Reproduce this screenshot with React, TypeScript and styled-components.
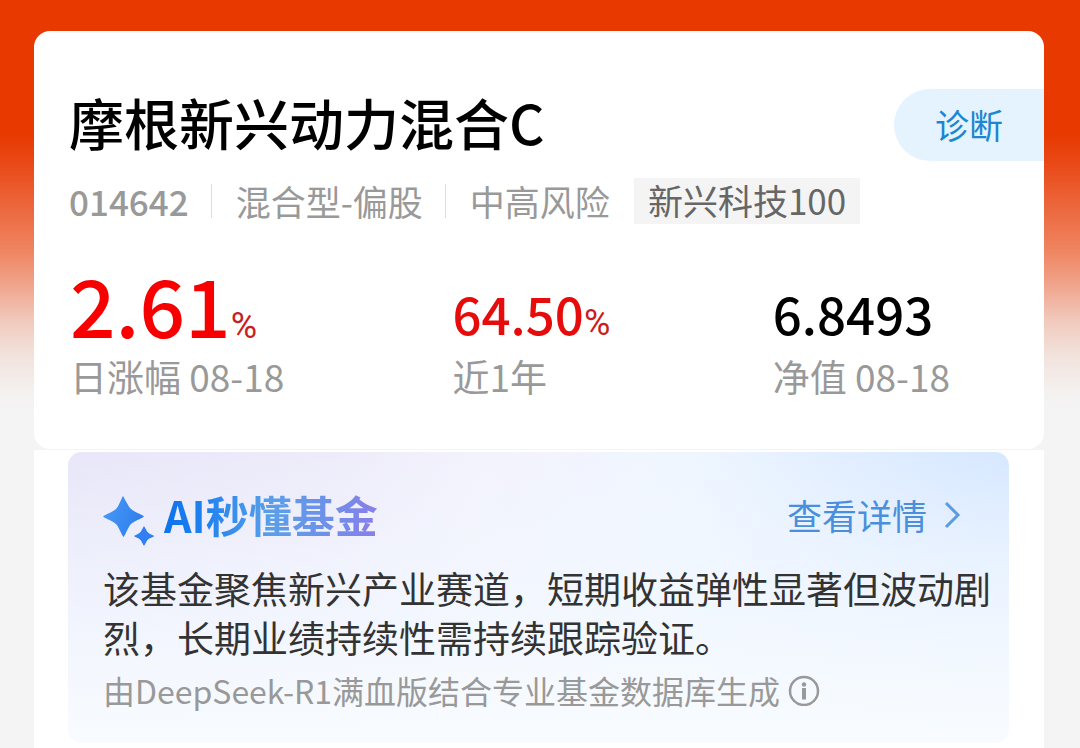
import React from 'react';
import styled, { createGlobalStyle } from 'styled-components';

const sans = `'Noto Sans CJK SC', 'Noto Sans', sans-serif`;

const GlobalStyle = createGlobalStyle`
  * { box-sizing: border-box; }
  body {
    margin: 0;
    background: #f4f4f4;
    font-family: ${sans};
    color: #000;
  }
  h1, h2, p, dl, dd, dt { margin: 0; font-weight: 400; }
`;

const Page = styled.main`
  min-height: 100vh;
  padding: 31px 36px 0 34px;
  background: linear-gradient(
      180deg,
      #e73900 0,
      #e73900 134px,
      #e94c1a 168px,
      #ec693f 210px,
      #ef8460 250px,
      #f0a48c 285px,
      #f1c9bc 320px,
      #f2e2dc 355px,
      #f4f2f1 395px,
      #f4f4f4 412px
    )
    no-repeat;
`;

const FundCard = styled.section`
  padding: 58px 0 49px 35px;
  border-radius: 16px;
  background: #fff;
`;

const TitleRow = styled.header`
  display: flex;
  align-items: flex-start;
  justify-content: space-between;
  height: 72px;
`;

const FundName = styled.h1`
  font-size: 55px;
  font-weight: 500;
  line-height: 64px;
  white-space: nowrap;
`;

const DiagnoseButton = styled.button`
  width: 150px;
  height: 72px;
  padding: 0;
  border: 0;
  border-radius: 36px 0 0 36px;
  background: #e5f3ff;
  color: #1c86d1;
  font: 400 34px/70px ${sans};
`;

const MetaRow = styled.div`
  display: flex;
  align-items: center;
  height: 46px;
  margin-top: 17px;
  font-size: 35px;
  line-height: 44px;
  color: #999;
  white-space: nowrap;
`;

const Code = styled.span`
  font-weight: 500;
`;

const Divider = styled.span`
  width: 1px;
  height: 34px;
  margin: 0 24px 0 22px;
  background: #ddd;
`;

const Tag = styled.span`
  height: 46px;
  margin-left: 24px;
  padding: 0 14px;
  background: #f4f4f4;
  color: #666;
`;

const Stats = styled.dl`
  display: grid;
  grid-template-columns: 382fr 320fr 271fr;
  margin-top: 40px;
  padding-left: 1px;
`;

const Stat = styled.div`
  display: flex;
  flex-direction: column;
`;

const Value = styled.dd<{ $large?: boolean; $color: string }>`
  order: -1;
  height: 88px;
  padding-top: ${(p) => (p.$large ? 0 : 10)}px;
  font-size: ${(p) => (p.$large ? 80 : 51)}px;
  font-weight: 500;
  line-height: 78px;
  color: ${(p) => p.$color};
  white-space: nowrap;
`;

const Percent = styled.span`
  font: 400 36px/36px 'Roboto', sans-serif;
  color: #c81e1e;
`;

const Label = styled.dt`
  font-size: 37px;
  line-height: 48px;
  color: #999;
  white-space: nowrap;
`;

const Insight = styled.section`
  margin-top: 1px;
  padding: 2px 35px 12px 34px;
  background: #fff;
`;

const InsightPanel = styled.div`
  padding: 36px 16px 30px 35px;
  border-radius: 14px;
  background:
    linear-gradient(180deg, rgba(247, 251, 255, 0) 0%, rgba(243, 248, 255, 0.75) 55%, #f8fcff 100%),
    radial-gradient(ellipse 320px 260px at 100% 0, #d6e8ff, rgba(214, 232, 255, 0)),
    linear-gradient(100deg, #e8e6f8 0%, #eeecfa 28%, #f3f3fd 42%, #eff6ff 64%, #e8f0ff 100%);
`;

const InsightHeader = styled.header`
  display: flex;
  align-items: flex-start;
  height: 60px;
`;

const InsightTitle = styled.h2`
  margin-left: 9px;
  font-size: 43px;
  font-weight: 700;
  line-height: 52px;
  background: linear-gradient(90deg, #0f73ea 0%, #2183f0 20%, #5b9fe8 50%, #6f8fea 78%, #8a7ee8 100%);
  background-clip: text;
  -webkit-background-clip: text;
  color: transparent;
`;

const DetailLink = styled.a`
  display: flex;
  align-items: center;
  gap: 16px;
  margin: 0 32px 0 auto;
  font-size: 35px;
  line-height: 54px;
  color: #4a8fdb;
  text-decoration: none;
`;

const Summary = styled.p`
  margin-top: 16px;
  font-size: 37px;
  line-height: 49px;
  color: #333;
`;

const Source = styled.p`
  display: flex;
  align-items: center;
  gap: 8px;
  margin-top: 5px;
  font-size: 32px;
  line-height: 46px;
  color: #999;
`;

const SparkleIcon = styled.svg`
  flex: none;
  margin-top: 8px;
`;

const Sparkle = () => (
  <SparkleIcon width="52" height="50" viewBox="0 0 52 50" aria-hidden="true">
    <defs>
      <linearGradient id="spark" x1="0" y1="0" x2="1" y2="0.4">
        <stop offset="0" stopColor="#4a9bf5" />
        <stop offset="1" stopColor="#2f80ee" />
      </linearGradient>
    </defs>
    <path
      fill="url(#spark)"
      d="M20 0C22 3 25 10 28 13C31 16 38 18 41 20.500C38 23 31 25 28 28C25 31 23 38 20.500 41C18 38 16 31 13 28C10 25 3 23 0 20.500C3 18 10 16 13 13C16 10 18 3 20 0Z"
    />
    <path
      fill="#3080f3"
      d="M41 30C42.500 32 43.500 35 45 36.500C46.500 38 49.500 39 51.500 40C49.500 41.500 46.500 42 45 43.500C43.500 45 42.500 48 41 50C39.500 48 38.500 45 37 43.500C35.500 42 32.500 41.500 31 40C32.500 39 35.500 38 37 36.500C38.500 35 39.500 32 41 30Z"
    />
  </SparkleIcon>
);

const Chevron = () => (
  <svg width="18" height="30" viewBox="0 0 18 30" fill="none" aria-hidden="true">
    <path d="M3 3L15 15L3 27" stroke="#5b9be0" strokeWidth="3" />
  </svg>
);

const InfoIcon = () => (
  <svg width="32" height="32" viewBox="0 0 32 32" fill="none" aria-hidden="true">
    <circle cx="16" cy="17" r="14" stroke="#999" strokeWidth="2.500" />
    <circle cx="16" cy="10.500" r="2.200" fill="#999" />
    <path d="M16 14V25.500" stroke="#999" strokeWidth="4" />
  </svg>
);

export default function App() {
  return (
    <>
      <GlobalStyle />
      <Page>
        <FundCard>
          <TitleRow>
            <FundName>摩根新兴动力混合C</FundName>
            <DiagnoseButton type="button">诊断</DiagnoseButton>
          </TitleRow>
          <MetaRow>
            <Code>014642</Code>
            <Divider />
            <span>混合型-偏股</span>
            <Divider />
            <span>中高风险</span>
            <Tag>新兴科技100</Tag>
          </MetaRow>
          <Stats>
            <Stat>
              <Label>日涨幅 08-18</Label>
              <Value $large $color="#f80000">
                2.61
                <Percent>%</Percent>
              </Value>
            </Stat>
            <Stat>
              <Label>近1年</Label>
              <Value $color="#e60c0c">
                64.50
                <Percent>%</Percent>
              </Value>
            </Stat>
            <Stat>
              <Label>净值 08-18</Label>
              <Value $color="#000">6.8493</Value>
            </Stat>
          </Stats>
        </FundCard>
        <Insight>
          <InsightPanel>
            <InsightHeader>
              <Sparkle />
              <InsightTitle>AI秒懂基金</InsightTitle>
              <DetailLink href="#detail">
                查看详情
                <Chevron />
              </DetailLink>
            </InsightHeader>
            <Summary>该基金聚焦新兴产业赛道，短期收益弹性显著但波动剧烈，长期业绩持续性需持续跟踪验证。</Summary>
            <Source>
              由DeepSeek-R1满血版结合专业基金数据库生成
              <InfoIcon />
            </Source>
          </InsightPanel>
        </Insight>
      </Page>
    </>
  );
}
